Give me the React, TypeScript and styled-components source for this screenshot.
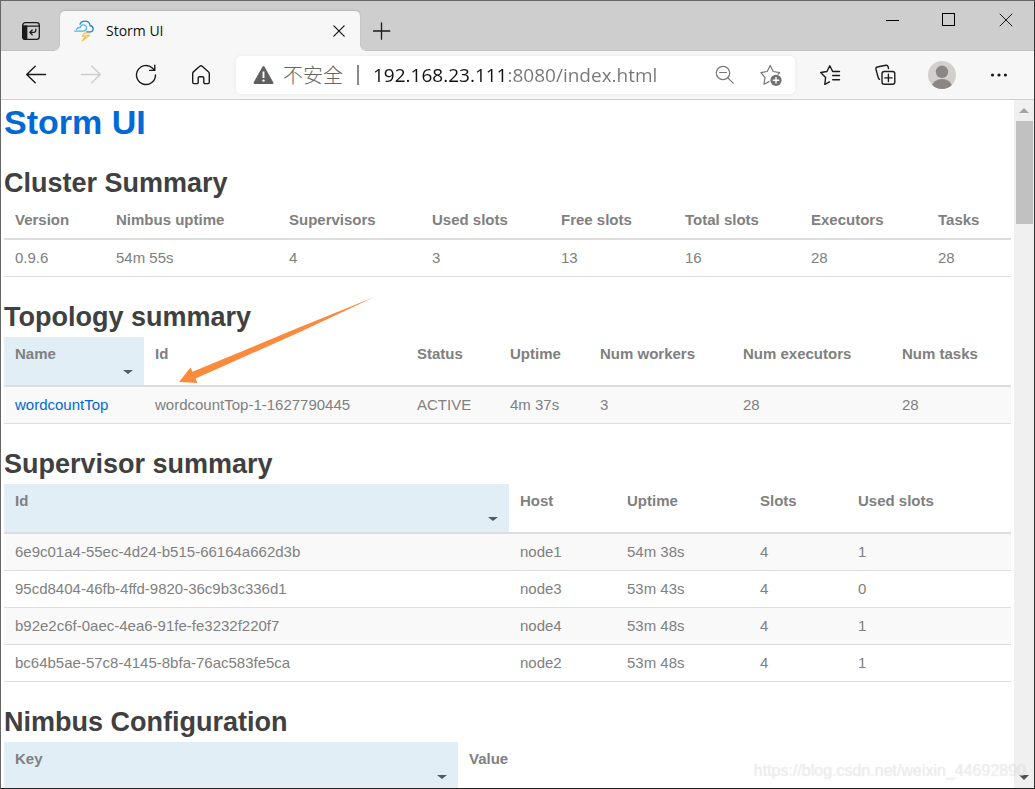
import React, { useState } from 'react';
import styled, { createGlobalStyle, css } from 'styled-components';

const GlobalStyle = createGlobalStyle`
  *, *::before, *::after { box-sizing: border-box; }
  body { margin: 0; background: #fff; }
  button { font: inherit; color: inherit; padding: 0; border: 0; background: none; cursor: pointer; }
  svg { display: block; }
`;

const uiFont = "'Open Sans', 'Noto Sans CJK SC', sans-serif";

const BrowserWindow = styled.div`
  position: relative;
  display: flex;
  flex-direction: column;
  height: 100vh;
  overflow: hidden;
  border: 1px solid #666;
  border-right-color: #333;
  border-bottom-color: #222;
  font-family: ${uiFont};
`;

const TitleBar = styled.header`
  display: flex;
  align-items: flex-end;
  flex: none;
  height: 50px;
  background: #cecece;
  box-shadow: inset 0 -1px #c2c2c2;
`;

const IconButton = styled.button<{ $width: number; $height?: number }>`
  display: flex;
  flex: none;
  align-items: center;
  justify-content: center;
  width: ${p => p.$width}px;
  height: ${p => p.$height ?? 40}px;
`;

const Tab = styled.div`
  position: relative;
  display: flex;
  align-items: center;
  gap: 12px;
  width: 300px;
  height: 40px;
  padding: 0 11px 0 14px;
  border-radius: 5px 5px 0 0;
  background: #f7f7f7;
  box-shadow: 0 -1px 2px rgba(0, 0, 0, 0.12);

  &::before,
  &::after {
    content: '';
    position: absolute;
    bottom: 0;
    width: 5px;
    height: 5px;
  }
  &::before {
    left: -5px;
    background: radial-gradient(circle at 0 0, #cecece 4px, #f7f7f7 5px);
  }
  &::after {
    right: -5px;
    background: radial-gradient(circle at 100% 0, #cecece 4px, #f7f7f7 5px);
  }
`;

const TabTitle = styled.span`
  flex: 1;
  font-size: 14px;
  line-height: 20px;
  color: #111;
`;

const WindowControls = styled.div`
  display: flex;
  align-self: flex-start;
  margin-left: auto;
`;

const Toolbar = styled.nav`
  display: flex;
  align-items: center;
  flex: none;
  height: 49px;
  padding: 0 8px 0 7px;
  background: #f7f7f7;
  border-bottom: 1px solid #d0d0d0;
`;

const AddressBar = styled.form`
  display: flex;
  align-items: center;
  flex: 1;
  min-width: 0;
  height: 38px;
  margin: 0 7px 0 8px;
  padding: 0 1px 0 17px;
  border-radius: 5px;
  background: #fff;
  box-shadow: 0 0 4px rgba(0, 0, 0, 0.06);
`;

const SecurityLabel = styled.span`
  flex: none;
  margin-left: 9px;
  padding-right: 14px;
  font-family: 'Noto Sans CJK SC', sans-serif;
  font-size: 20px;
  font-weight: 300;
  line-height: 20px;
  color: #666;
  border-right: 2px solid #8a8a8a;
`;

const UrlInput = styled.input`
  flex: 1;
  min-width: 0;
  height: 30px;
  margin-left: 14px;
  padding: 0;
  border: 0;
  outline: 0;
  font-family: ${uiFont};
  font-size: 19px;
  color: transparent;
  background: linear-gradient(90deg, #111 134px, #767676 134px);
  background-clip: text;
  -webkit-background-clip: text;
`;

const Body = styled.div`
  display: flex;
  flex: 1;
  min-height: 0;
`;

const Page = styled.main`
  position: relative;
  flex: 1;
  min-width: 0;
  padding: 2px 3px 0;
  overflow: hidden;
  font-family: 'Liberation Sans', Arial, sans-serif;
  font-size: 15px;
  line-height: 18px;
  color: #808080;
  background: #fff;
`;

const PageTitle = styled.h1`
  margin: 0;
  padding-bottom: 1px;
  font-size: 34px;
  line-height: 40px;
`;

const Link = styled.a`
  color: #0069d6;
  text-decoration: none;
`;

const SectionTitle = styled.h2`
  margin: 24px 0 4px;
  font-size: 27px;
  line-height: 32px;
  color: #404040;
`;

const Table = styled.table`
  width: 100%;
  table-layout: fixed;
  border-collapse: separate;
  border-spacing: 0;
`;

const Col = styled.col<{ $share: number }>`
  width: ${p => p.$share}%;
`;

const HeadCell = styled.th<{ $sorted: boolean }>`
  padding: 8px 11px 9px;
  vertical-align: top;
  text-align: left;
  white-space: nowrap;
  border-bottom: 2px solid #ddd;
  ${p => p.$sorted && css`
    padding-bottom: 11px;
    background: #e2eef6;
  `}
`;

const SortButton = styled.button`
  display: block;
  width: 100%;
  font-weight: bold;
  line-height: 18px;
  text-align: left;
`;

const Caret = styled.span`
  display: block;
  width: 0;
  margin: 7px 0 0 auto;
  border: solid transparent;
  border-width: 4px 5px 0;
  border-top-color: #55595c;
`;

const BodyRow = styled.tr<{ $shaded: boolean }>`
  background: ${p => (p.$shaded ? '#f9f9f9' : '#fff')};
`;

const Cell = styled.td`
  padding: 9px 11px;
  white-space: nowrap;
  border-bottom: 1px solid #ddd;
`;

const ArrowMark = styled.svg`
  position: absolute;
  left: 178px;
  top: 196px;
  pointer-events: none;
`;

const ScrollTrack = styled.div`
  display: flex;
  flex-direction: column;
  align-items: center;
  flex: none;
  width: 20px;
  background: #f0f0f0;
`;

const ScrollThumb = styled.div`
  width: 17px;
  height: 103px;
  margin-bottom: auto;
  background: #c1c1c1;
`;

const Watermark = styled.span`
  position: absolute;
  right: 8px;
  bottom: 7px;
  font-family: 'Liberation Sans', Arial, sans-serif;
  font-size: 16px;
  line-height: 20px;
  color: rgba(255, 255, 255, 0.5);
  text-shadow: 0 0 1px rgba(0, 0, 0, 0.16);
  pointer-events: none;
`;

type Column = { label: string; weight: number };

type SummaryProps = {
  title: string;
  columns: Column[];
  rows: React.ReactNode[][];
  sortable?: boolean;
};

function Summary({ title, columns, rows, sortable = false }: SummaryProps) {
  const [sorted, setSorted] = useState(0);
  const total = columns.reduce((sum, c) => sum + c.weight, 0);
  return (
    <section>
      <SectionTitle>{title}</SectionTitle>
      <Table aria-label={title}>
        <colgroup>
          {columns.map(c => <Col key={c.label} $share={(c.weight / total) * 100} />)}
        </colgroup>
        <thead>
          <tr>
            {columns.map((c, i) => {
              const active = sortable && sorted === i;
              return (
                <HeadCell key={c.label} scope="col" $sorted={active}>
                  {sortable
                    ? <SortButton type="button" onClick={() => setSorted(i)}>{c.label}</SortButton>
                    : c.label}
                  {active && <Caret />}
                </HeadCell>
              );
            })}
          </tr>
        </thead>
        <tbody>
          {rows.map((row, r) => (
            <BodyRow key={r} $shaded={sortable && r % 2 === 0}>
              {row.map((value, i) => <Cell key={i}>{value}</Cell>)}
            </BodyRow>
          ))}
        </tbody>
      </Table>
    </section>
  );
}

const stroke = (color: string, width = 1.3) => ({
  fill: 'none',
  stroke: color,
  strokeWidth: width,
  strokeLinecap: 'round' as const,
  strokeLinejoin: 'round' as const,
});

const TabActionsIcon = () => (
  <svg width="20" height="20" viewBox="0 0 20 20" {...stroke('#1a1a1a', 1.3)}>
    <rect x="1.7" y="1.7" width="16.6" height="16.6" rx="2.6" />
    <path d="M2 5.2h16" />
    <path d="M1.7 5.2h4v13.1H4a2.3 2.3 0 0 1-2.300-2.300z" fill="#1a1a1a" />
    <path d="M14.800 8.200v1.400q0 1.800-1.800 1.800H9M11.200 9l-2.400 2.400 2.400 2.400" />
  </svg>
);

const StormIcon = () => (
  <svg width="20" height="22" viewBox="0 0 20 22" {...stroke('#2d85c5', 1.3)}>
    <path d="M6 4.200C6.800 2.200 8.600 1.200 11 1.200c2.800 0 4.700 1.800 5 4.300 1.800.3 3.100 1.600 3.100 3.300 0 1.800-1.400 3.200-3.300 3.200h-3" />
    <path d="M.8 11.200h8.200c2.300 0 3.500-1.400 3.500-3.100S11.200 4.900 9.200 4.900C7.400 4.900 6.200 6.100 6.200 7.600C4 7.200 2.800 8.400 2.600 9.600" stroke="#4db8ef" />
    <path d="M15.500 13H11L8.200 16.200H11.800L8.300 20.900L15.400 15.400H12.400" stroke="#f9bd45" strokeWidth="1.200" />
  </svg>
);

const CrossIcon = ({ size, width }: { size: number; width: number }) => (
  <svg width={size} height={size} viewBox="0 0 14 14" {...stroke('#1a1a1a', width)}>
    <path d="M1 1l12 12M13 1L1 13" />
  </svg>
);

const PlusIcon = () => (
  <svg width="18" height="18" viewBox="0 0 18 18" {...stroke('#1a1a1a', 1.3)}>
    <path d="M8.500 .8v16.400M.4 9h16.400" />
  </svg>
);

const MinimizeIcon = () => (
  <svg width="14" height="14" viewBox="0 0 14 14"><path d="M0 7.500h13" stroke="#000" /></svg>
);

const MaximizeIcon = () => (
  <svg width="14" height="14" viewBox="0 0 14 14"><rect x=".5" y=".5" width="12" height="12" fill="none" stroke="#000" /></svg>
);

const ArrowIcon = ({ color, flip = false }: { color: string; flip?: boolean }) => (
  <svg width="22" height="20" viewBox="0 0 22 20" {...stroke(color, 1.4)}>
    <path d={flip ? 'M1.500 9.500h18.500M11.800 1.300L20.300 9.500l-8.500 8.200' : 'M20.500 9.500H2M10.200 1.300L1.700 9.500l8.500 8.200'} />
  </svg>
);

const ReloadIcon = () => (
  <svg width="22" height="22" viewBox="0 0 22 22" {...stroke('#1a1a1a', 1.4)}>
    <path d="M20.500 11A9.500 9.500 0 1 1 17.600 4.200L19.700 6.200M19.800 1.300v5.100h-5.100" />
  </svg>
);

const HomeIcon = () => (
  <svg width="20" height="22" viewBox="0 0 20 22" {...stroke('#1a1a1a', 1.4)}>
    <path d="M10 1.700Q10.600 1.700 11.200 2.200L17.600 7.900Q18.300 8.500 18.300 9.500V18.300a1.300 1.300 0 0 1-1.300 1.300H14a1.200 1.200 0 0 1-1.200-1.200V14a1.300 1.300 0 0 0-1.300-1.300h-3A1.300 1.300 0 0 0 7.200 14v4.400A1.200 1.200 0 0 1 6 19.600H3a1.300 1.300 0 0 1-1.300-1.300V9.500Q1.700 8.500 2.400 7.900L8.800 2.200Q9.400 1.700 10 1.700z" />
  </svg>
);

const WarningIcon = () => (
  <svg width="21" height="20" viewBox="0 0 21 20">
    <path d="M10.500 2L19.500 18H1.500z" fill="#606060" stroke="#606060" strokeWidth="2" strokeLinejoin="round" />
    <path d="M10.500 6.500v6.500" stroke="#fff" strokeWidth="1.900" />
    <circle cx="10.500" cy="15.600" r="1.200" fill="#fff" />
  </svg>
);

const ZoomOutIcon = () => (
  <svg width="20" height="20" viewBox="0 0 20 20" {...stroke('#767676', 1.2)}>
    <circle cx="8" cy="8" r="6.700" />
    <path d="M4.600 7.500h6.800M12.800 12.800l5.400 5.400" />
  </svg>
);

const AddFavoriteIcon = () => (
  <svg width="24" height="24" viewBox="0 0 24 24" {...stroke('#767676', 1.2)}>
    <path d="M10 18.600L5 21.200 6 14.500 1.900 9.600 8.200 8.500 11.200 2.400 14.200 8.500 20.700 9.600 19 11.200" />
    <circle cx="17" cy="17.300" r="5.600" fill="#707070" stroke="none" />
    <path d="M17 14.500v5.600M14.200 17.300h5.600" stroke="#fff" strokeWidth="1.400" />
  </svg>
);

const FavoritesIcon = () => (
  <svg width="22" height="22" viewBox="0 0 22 22" {...stroke('#1a1a1a', 1.4)}>
    <path d="M10.500 17.800L5.800 20.300 6.600 13.400 1.700 8.500 7.900 7.500 10.800 1.700 13.700 7.500H20.500M13.700 11.500h6.800M13.700 15.800h6.800" />
  </svg>
);

const CollectionsIcon = () => (
  <svg width="22" height="22" viewBox="0 0 22 22" {...stroke('#1a1a1a', 1.4)}>
    <rect x="7" y="7.500" width="12.800" height="12.800" rx="2.200" />
    <path d="M13.400 10.300v7.200M9.800 13.900H17M4.400 15.300Q3.500 14.700 3.200 13.500L.9 5.100Q.6 3.500 2.200 3L11 1.200Q12.600 1 13 2.500L13.500 4.500" />
  </svg>
);

const AvatarIcon = () => (
  <svg width="28" height="28" viewBox="0 0 28 28">
    <clipPath id="avatar-clip"><circle cx="14" cy="14" r="14" /></clipPath>
    <g clipPath="url(#avatar-clip)">
      <rect width="28" height="28" fill="#d2d0cd" />
      <circle cx="14" cy="10.800" r="6.200" fill="#8b8784" />
      <ellipse cx="14" cy="26" rx="10" ry="8" fill="#8b8784" />
    </g>
  </svg>
);

const MoreIcon = () => (
  <svg width="18" height="4" viewBox="0 0 18 4" fill="#1a1a1a">
    <circle cx="3.500" cy="2" r="1.600" /><circle cx="10" cy="2" r="1.600" /><circle cx="16.400" cy="2" r="1.600" />
  </svg>
);

const clusterColumns: Column[] = [
  { label: 'Version', weight: 101 },
  { label: 'Nimbus uptime', weight: 173 },
  { label: 'Supervisors', weight: 143 },
  { label: 'Used slots', weight: 129 },
  { label: 'Free slots', weight: 124 },
  { label: 'Total slots', weight: 126 },
  { label: 'Executors', weight: 127 },
  { label: 'Tasks', weight: 84 },
];

const topologyColumns: Column[] = [
  { label: 'Name', weight: 140 },
  { label: 'Id', weight: 262 },
  { label: 'Status', weight: 93 },
  { label: 'Uptime', weight: 90 },
  { label: 'Num workers', weight: 143 },
  { label: 'Num executors', weight: 159 },
  { label: 'Num tasks', weight: 120 },
];

const supervisorColumns: Column[] = [
  { label: 'Id', weight: 505 },
  { label: 'Host', weight: 107 },
  { label: 'Uptime', weight: 133 },
  { label: 'Slots', weight: 98 },
  { label: 'Used slots', weight: 164 },
];

const supervisors = [
  ['6e9c01a4-55ec-4d24-b515-66164a662d3b', 'node1', '54m 38s', 4, 1],
  ['95cd8404-46fb-4ffd-9820-36c9b3c336d1', 'node3', '53m 43s', 4, 0],
  ['b92e2c6f-0aec-4ea6-91fe-fe3232f220f7', 'node4', '53m 48s', 4, 1],
  ['bc64b5ae-57c8-4145-8bfa-76ac583fe5ca', 'node2', '53m 48s', 4, 1],
];

const configColumns: Column[] = [
  { label: 'Key', weight: 454 },
  { label: 'Value', weight: 553 },
];

export default function App() {
  return (
    <>
      <GlobalStyle />
      <BrowserWindow>
        <TitleBar>
          <IconButton $width={59} aria-label="Tab actions"><TabActionsIcon /></IconButton>
          <Tab>
            <StormIcon />
            <TabTitle>Storm UI</TabTitle>
            <IconButton $width={20} aria-label="Close tab"><CrossIcon size={12} width={1.5} /></IconButton>
          </Tab>
          <IconButton $width={43} aria-label="New tab"><PlusIcon /></IconButton>
          <WindowControls>
            <IconButton $width={57} $height={38} aria-label="Minimize"><MinimizeIcon /></IconButton>
            <IconButton $width={56} $height={38} aria-label="Maximize"><MaximizeIcon /></IconButton>
            <IconButton $width={57} $height={38} aria-label="Close"><CrossIcon size={14} width={1} /></IconButton>
          </WindowControls>
        </TitleBar>
        <Toolbar>
          <IconButton $width={55} aria-label="Back"><ArrowIcon color="#1a1a1a" /></IconButton>
          <IconButton $width={55} aria-label="Forward"><ArrowIcon color="#cdcdcd" flip /></IconButton>
          <IconButton $width={55} aria-label="Reload"><ReloadIcon /></IconButton>
          <IconButton $width={55} aria-label="Home"><HomeIcon /></IconButton>
          <AddressBar onSubmit={e => e.preventDefault()}>
            <WarningIcon />
            <SecurityLabel>不安全</SecurityLabel>
            <UrlInput aria-label="Address" defaultValue="192.168.23.111:8080/index.html" />
            <IconButton type="button" $width={46} $height={38} aria-label="Zoom out"><ZoomOutIcon /></IconButton>
            <IconButton type="button" $width={46} $height={38} aria-label="Add to favorites"><AddFavoriteIcon /></IconButton>
          </AddressBar>
          <IconButton $width={56} aria-label="Favorites"><FavoritesIcon /></IconButton>
          <IconButton $width={56} aria-label="Collections"><CollectionsIcon /></IconButton>
          <IconButton $width={56} aria-label="Profile"><AvatarIcon /></IconButton>
          <IconButton $width={56} aria-label="More"><MoreIcon /></IconButton>
        </Toolbar>
        <Body>
          <Page>
            <PageTitle><Link href="/">Storm UI</Link></PageTitle>
            <Summary
              title="Cluster Summary"
              columns={clusterColumns}
              rows={[['0.9.6', '54m 55s', 4, 3, 13, 16, 28, 28]]}
            />
            <Summary
              title="Topology summary"
              sortable
              columns={topologyColumns}
              rows={[[
                <Link href="#topology">wordcountTop</Link>,
                'wordcountTop-1-1627790445', 'ACTIVE', '4m 37s', 3, 28, 28,
              ]]}
            />
            <Summary title="Supervisor summary" sortable columns={supervisorColumns} rows={supervisors} />
            <Summary title="Nimbus Configuration" sortable columns={configColumns} rows={[]} />
            <ArrowMark width="197" height="88" viewBox="0 0 197 88">
              <path d="M0 86L11.500 71.500L13.500 75.800L120 31.500L196 .8L122 35.500L16.500 82.500L18.500 87Z" fill="#fb8a3c" />
            </ArrowMark>
          </Page>
          <ScrollTrack aria-hidden="true">
            <IconButton as="div" $width={20} $height={21}>
              <svg width="10" height="5" viewBox="0 0 10 5"><path d="M0 5l5-5 5 5z" fill="#a3a3a3" /></svg>
            </IconButton>
            <ScrollThumb />
            <IconButton as="div" $width={20} $height={21}>
              <svg width="10" height="5" viewBox="0 0 10 5"><path d="M0 0l5 5 5-5z" fill="#505050" /></svg>
            </IconButton>
          </ScrollTrack>
        </Body>
        <Watermark>https://blog.csdn.net/weixin_44692890</Watermark>
      </BrowserWindow>
    </>
  );
}
